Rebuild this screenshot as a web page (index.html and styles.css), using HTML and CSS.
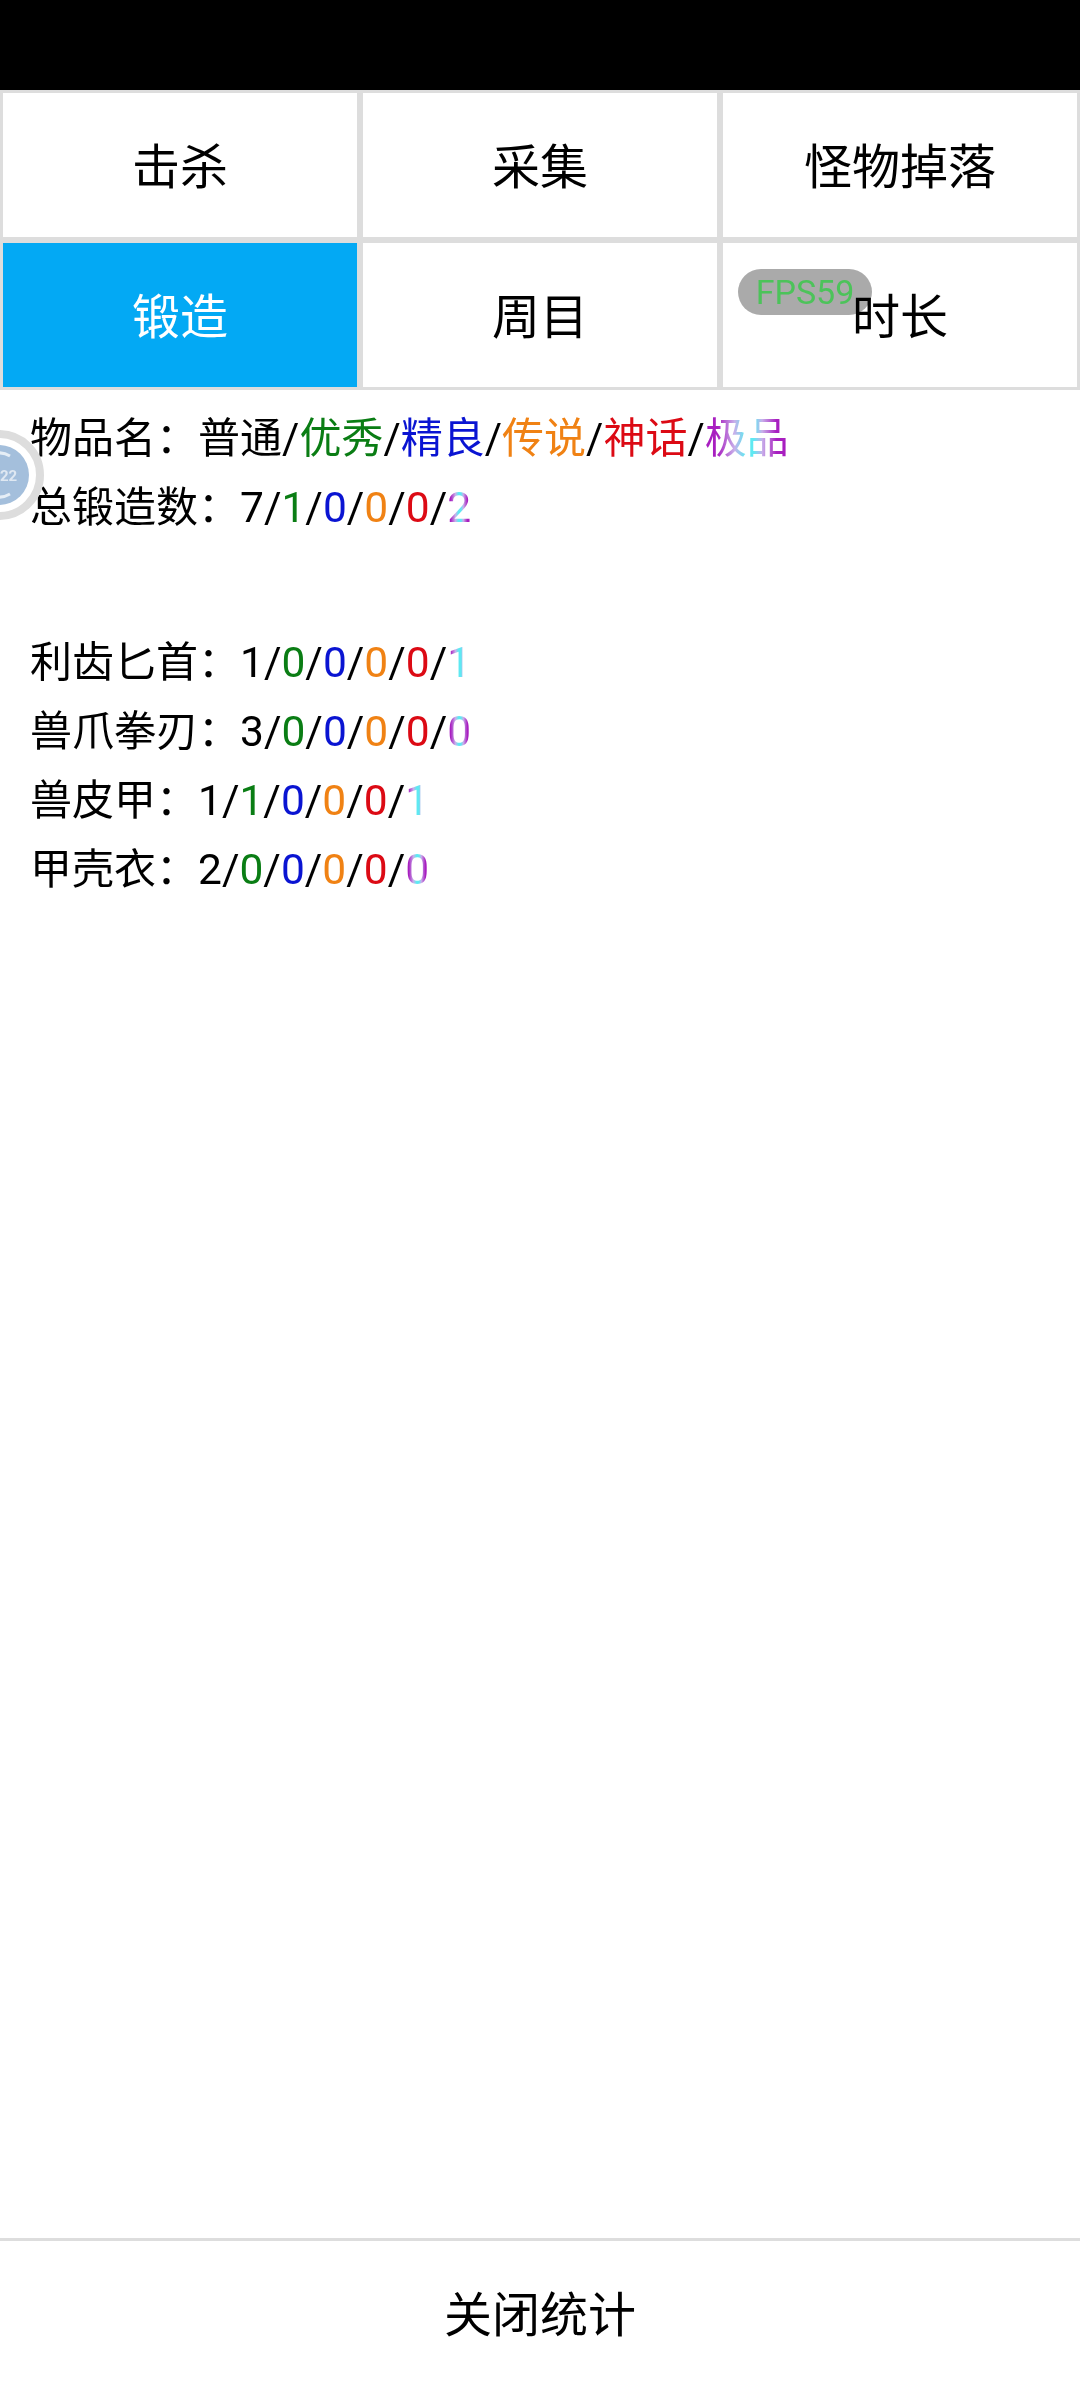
FILE: index.html
```html
<!DOCTYPE html>
<html lang="zh-CN">
<head>
    <meta charset="UTF-8">
    <meta name="viewport" content="width=device-width, initial-scale=1.0">
    <title>统计</title>
    <link rel="stylesheet" href="styles.css">
</head>
<body>
    <div class="status-bar"></div>

    <!-- Tabs -->
    <div class="tabs">
        <div class="tab">击杀</div>
        <div class="tab">采集</div>
        <div class="tab">怪物掉落</div>
        <div class="tab active">锻造</div>
        <div class="tab">周目</div>
        <div class="tab">时长</div>
    </div>

    <!-- Stats -->
    <div class="content">
        <p class="line">物品名<span class="colon">：</span>普通/<span class="green">优秀</span>/<span class="blue">精良</span>/<span class="orange">传说</span>/<span class="red">神话</span>/<span class="best">极品</span></p>
        <p class="line">总锻造数<span class="colon">：</span><span class="nums">7/<span class="green">1</span>/<span class="blue">0</span>/<span class="orange">0</span>/<span class="red">0</span>/<span class="best">2</span></span></p>
        <div class="spacer"></div>
        <p class="line">利齿匕首<span class="colon">：</span><span class="nums">1/<span class="green">0</span>/<span class="blue">0</span>/<span class="orange">0</span>/<span class="red">0</span>/<span class="best">1</span></span></p>
        <p class="line">兽爪拳刃<span class="colon">：</span><span class="nums">3/<span class="green">0</span>/<span class="blue">0</span>/<span class="orange">0</span>/<span class="red">0</span>/<span class="best">0</span></span></p>
        <p class="line">兽皮甲<span class="colon">：</span><span class="nums">1/<span class="green">1</span>/<span class="blue">0</span>/<span class="orange">0</span>/<span class="red">0</span>/<span class="best">1</span></span></p>
        <p class="line">甲壳衣<span class="colon">：</span><span class="nums">2/<span class="green">0</span>/<span class="blue">0</span>/<span class="orange">0</span>/<span class="red">0</span>/<span class="best">0</span></span></p>
    </div>

    <div class="close-bar">关闭统计</div>

    <!-- Overlays -->
    <div class="fps">FPS59</div>
    <div class="ball">
        <svg width="90" height="90" viewBox="0 0 90 90">
            <circle cx="45" cy="45" r="41" fill="#fff" stroke="#ddd" stroke-width="8"/>
            <circle cx="45" cy="45" r="30" fill="#a4bfdc"/>
            <path d="M38 24 A22 22 0 0 1 56 26" fill="none" stroke="#e6eef6" stroke-width="3"/>
            <path d="M56 64 A22 22 0 0 1 38 66" fill="none" stroke="#e6eef6" stroke-width="3"/>
        </svg>
        <span class="ball-text">22</span>
    </div>
</body>
</html>
```

FILE: styles.css
```css
* {
    margin: 0;
    padding: 0;
    box-sizing: border-box;
}

body {
    display: flex;
    flex-direction: column;
    width: 1080px;
    height: 2388px;
    background-color: #fff;
    color: #000;
    font-family: Roboto, "Noto Sans CJK SC", sans-serif;
    overflow: hidden;
    position: relative;
}

.status-bar {
    height: 90px;
    background-color: #000;
}

/* Tabs */
.tabs {
    display: grid;
    grid-template-columns: repeat(3, 360px);
    grid-auto-rows: 150px;
}

.tab {
    display: flex;
    justify-content: center;
    align-items: center;
    padding-bottom: 4px;
    border: 3px solid #ddd;
    font-size: 48px;
    position: relative;
    z-index: 2;
}

.tab.active {
    background-color: #03a9f4;
    color: #fff;
}

/* Stats */
.content {
    flex: 1;
    padding: 14px 30px 0;
}

.line {
    height: 69px;
    font-size: 42px;
    line-height: 69px;
    white-space: nowrap;
}

.spacer {
    height: 86px;
}

.colon {
    font-family: "Noto Sans CJK TC", sans-serif;
    line-height: 1;
}

.nums {
    font-size: 42.5px;
    line-height: 1;
}

.green { color: #0a7d14; }
.blue { color: #0a14d2; }
.orange { color: #f08214; }
.red { color: #dc0a14; }

.best {
    background: linear-gradient(90deg, #a81fc0 15%, #c8b0ea 35%, #5ee9f2 48%, #5ee9f2 58%, #c8b0ea 68%, #a81fc0 85%);
    -webkit-background-clip: text;
    background-clip: text;
    color: transparent;
}

/* Close button */
.close-bar {
    display: flex;
    justify-content: center;
    align-items: center;
    height: 150px;
    padding-bottom: 8px;
    border-top: 3px solid #ddd;
    font-size: 48px;
}

/* FPS badge */
.fps {
    position: absolute;
    top: 269px;
    left: 738px;
    width: 134px;
    height: 46px;
    border-radius: 23px;
    background-color: #aaa;
    color: #4cc35a;
    font-size: 34px;
    line-height: 46px;
    text-align: center;
    z-index: 3;
    mix-blend-mode: multiply;
}

/* Floating ball */
.ball {
    position: absolute;
    top: 430px;
    left: -46px;
    width: 90px;
    height: 90px;
    z-index: 1;
}

.ball svg {
    display: block;
}

.ball-text {
    position: absolute;
    top: 31px;
    left: 46px;
    font-size: 15px;
    font-weight: 700;
    line-height: 30px;
    color: #dfe8f2;
}
```
